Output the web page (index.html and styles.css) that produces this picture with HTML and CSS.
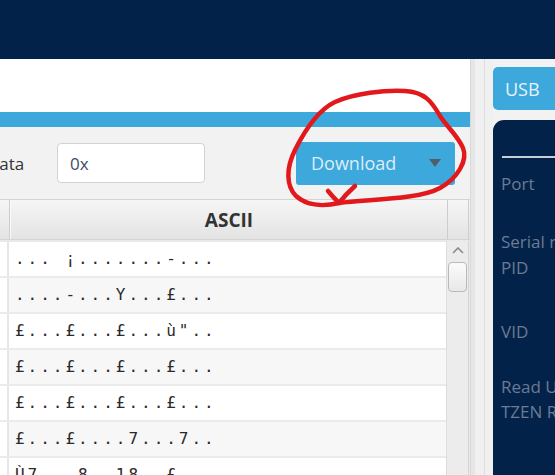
FILE: index.html
```html
<!DOCTYPE html>
<html>
<head>
<meta charset="utf-8">
<link rel="stylesheet" href="styles.css">
</head>
<body>
<div class="app">
  <header class="topbar"></header>
  <div class="main">
    <section class="left">
      <div class="blank"></div>
      <div class="progress"></div>
      <div class="toolbar">
        <span class="label">Data</span>
        <div class="input">0x</div>
        <button class="dl">
          <span>Download</span>
          <svg class="caret" width="12" height="8" viewBox="0 0 12 8"><path d="M0 0H12L6 8Z" fill="#535d67"/></svg>
        </button>
      </div>
      <div class="table">
        <div class="thead">
          <div class="th c0"></div>
          <div class="th c1">ASCII</div>
          <div class="th c2"></div>
        </div>
        <div class="tbody">
          <div class="rows">
            <div class="row"><div class="c0"></div><div class="cell">... ¡.......-...</div></div>
            <div class="row alt"><div class="c0"></div><div class="cell">....-...Y...£...</div></div>
            <div class="row"><div class="c0"></div><div class="cell">£...£...£...ù"..</div></div>
            <div class="row alt"><div class="c0"></div><div class="cell">£...£...£...£...</div></div>
            <div class="row"><div class="c0"></div><div class="cell">£...£...£...£...</div></div>
            <div class="row alt"><div class="c0"></div><div class="cell">£...£....7...7..</div></div>
            <div class="row"><div class="c0"></div><div class="cell">Ù7...8..18..£...</div></div>
          </div>
          <div class="scrollbar">
            <svg class="up" width="12" height="7" viewBox="0 0 12 7"><path d="M1 6L6 1L11 6" fill="none" stroke="#8a8a8a" stroke-width="1.6"/></svg>
            <div class="thumb"></div>
          </div>
        </div>
      </div>
    </section>
    <div class="splitter"></div>
    <aside class="right">
      <div class="tab">USB</div>
      <div class="panel">
        <div class="rule"></div>
        <div class="f f-port">Port</div>
        <div class="f f-serial">Serial number</div>
        <div class="f f-pid">PID</div>
        <div class="f f-vid">VID</div>
        <div class="f f-read">Read Unprotect (MCU)</div>
        <div class="f f-tzen">TZEN Regression</div>
      </div>
    </aside>
  </div>
  <svg class="annot" width="555" height="475" viewBox="0 0 555 475">
    <path d="M328 191 Q333 197 339 203 Q346 194 355 186" fill="none" stroke="#e2191c" stroke-width="4.5" stroke-linecap="round" stroke-linejoin="round"/>
    <path d="M339 203 C368 199 418 200 440 188 C458 178 468 160 463 148 C458 136 448 128 440 116 C432 102 425 92 405 91 C385 90 355 93 335 102 C318 110 304 132 295 150 C286 168 286 186 296 196 C306 205 322 207 339 203" fill="none" stroke="#e2191c" stroke-width="4.5" stroke-linecap="round" stroke-linejoin="round"/>
  </svg>
</div>
</body>
</html>
```
FILE: styles.css
```css
* { box-sizing: border-box; }
html, body { margin: 0; padding: 0; }
body {
  width: 555px;
  height: 475px;
  overflow: hidden;
  font-family: "Open Sans", "DejaVu Sans", sans-serif;
  background: #f2f2f2;
}
.app {
  position: relative;
  width: 555px;
  height: 475px;
  overflow: hidden;
  display: flex;
  flex-direction: column;
}
.topbar {
  height: 59px;
  flex: none;
  background: #03224a;
}
.main {
  flex: 1;
  display: flex;
  min-height: 0;
}
.left {
  width: 470px;
  flex: none;
  display: flex;
  flex-direction: column;
  overflow: hidden;
  background: #f2f2f2;
}
.blank {
  height: 53px;
  flex: none;
  background: #ffffff;
}
.progress {
  height: 15px;
  flex: none;
  background: #3ca8db;
}
.toolbar {
  height: 72px;
  flex: none;
  display: flex;
  align-items: center;
  background: #f2f2f2;
}
.label {
  margin-left: -13px;
  width: 70px;
  flex: none;
  font-size: 17px;
  color: #333333;
}
.input {
  width: 148px;
  height: 40px;
  flex: none;
  background: #ffffff;
  border: 1px solid #d2d2d2;
  border-radius: 4px;
  padding-left: 12px;
  display: flex;
  align-items: center;
  font-size: 17px;
  color: #3b4d68;
}
.dl {
  margin-left: auto;
  margin-right: 15px;
  width: 159px;
  height: 43px;
  border: none;
  border-radius: 3px;
  background: #3ca8dc;
  display: flex;
  align-items: center;
  justify-content: space-between;
  padding: 0 14px 0 15px;
  font-family: "Open Sans", sans-serif;
  font-size: 18px;
  color: #dcedf8;
}
.dl span { line-height: 1; }
.caret { display: block; }
.table {
  flex: 1;
  display: flex;
  flex-direction: column;
  min-height: 0;
}
.thead {
  height: 41px;
  flex: none;
  display: flex;
  border-top: 1px solid #d4d4d4;
  border-bottom: 1px solid #d4d4d4;
  background: linear-gradient(#f6f6f6, #e3e3e3);
}
.th { height: 100%; }
.thead .c0 { width: 10px; border-right: 1px solid #cdcdcd; }
.thead .c1 {
  width: 438px;
  border-right: 1px solid #cdcdcd;
  border-left: 1px solid #fafafa;
  display: flex;
  align-items: center;
  justify-content: center;
  font-weight: 700;
  font-size: 19px;
  color: #333333;
}
.thead .c2 { width: 21px; border-right: 1px solid #cdcdcd; }
.tbody {
  flex: 1;
  display: flex;
  min-height: 0;
  padding-top: 1px;
  background: #e9e9e9;
}
.rows {
  width: 446px;
  flex: none;
  display: flex;
  flex-direction: column;
}
.row {
  height: 36px;
  flex: none;
  display: flex;
  border-top: 1px solid #ebebeb;
  border-bottom: 1px solid #ebebeb;
  background: #ffffff;
}
.row.alt { background: #f7f7f7; }
.row .c0 {
  width: 9px;
  background: #ffffff;
  border-right: 2px solid #e6e6e6;
}
.cell {
  flex: 1;
  padding-left: 6px;
  padding-top: 7px;
  font-family: "DejaVu Sans Mono", monospace;
  font-size: 16px;
  letter-spacing: 2.97px;
  color: #2a2a2a;
  white-space: pre;
}
.scrollbar {
  width: 23px;
  flex: none;
  background: #ececec;
  border-left: 1px solid #dddddd;
  border-right: 1px solid #d4d4d4;
  display: flex;
  flex-direction: column;
  align-items: center;
}
.up { margin-top: 6px; display: block; }
.thumb {
  margin-top: 8px;
  width: 19px;
  height: 30px;
  border: 1px solid #b9b9b9;
  border-radius: 4px;
  background: linear-gradient(#fbfbfb, #e8e8e8);
}
.splitter {
  width: 23px;
  flex: none;
  background: #f0f0f0;
  border-left: 1px solid #dadada;
  box-shadow: inset 4px 0 0 #e6e6e6;
  position: relative;
}
.splitter::after {
  content: "";
  position: absolute;
  left: 13px;
  top: 0;
  bottom: 0;
  width: 1px;
  background: #dedede;
}
.right {
  flex: 1;
  min-width: 0;
  display: flex;
  flex-direction: column;
  padding-top: 8px;
  background: #f2f2f2;
  overflow: hidden;
}
.tab {
  width: 90px;
  height: 43px;
  flex: none;
  background: #3ca8db;
  border-radius: 5px 0 0 5px;
  padding-left: 12px;
  display: flex;
  align-items: center;
  font-size: 18px;
  color: #e6f3fb;
}
.panel {
  margin-top: 10px;
  flex: 1;
  background: #03224a;
  border-radius: 11px 0 0 0;
  padding-left: 8px;
  padding-top: 36px;
  display: flex;
  flex-direction: column;
}
.rule {
  height: 2px;
  margin-left: 1px;
  background: #c7ced8;
  flex: none;
}
.f {
  height: 24px;
  line-height: 24px;
  font-size: 17px;
  color: #6a7b93;
  white-space: nowrap;
  flex: none;
}
.f-port { margin-top: 14px; }
.f-serial { margin-top: 34px; }
.f-pid { margin-top: 2px; }
.f-vid { margin-top: 40px; }
.f-read { margin-top: 31px; }
.f-tzen { margin-top: 1px; }
.annot {
  position: absolute;
  left: 0;
  top: 0;
  pointer-events: none;
}
```
